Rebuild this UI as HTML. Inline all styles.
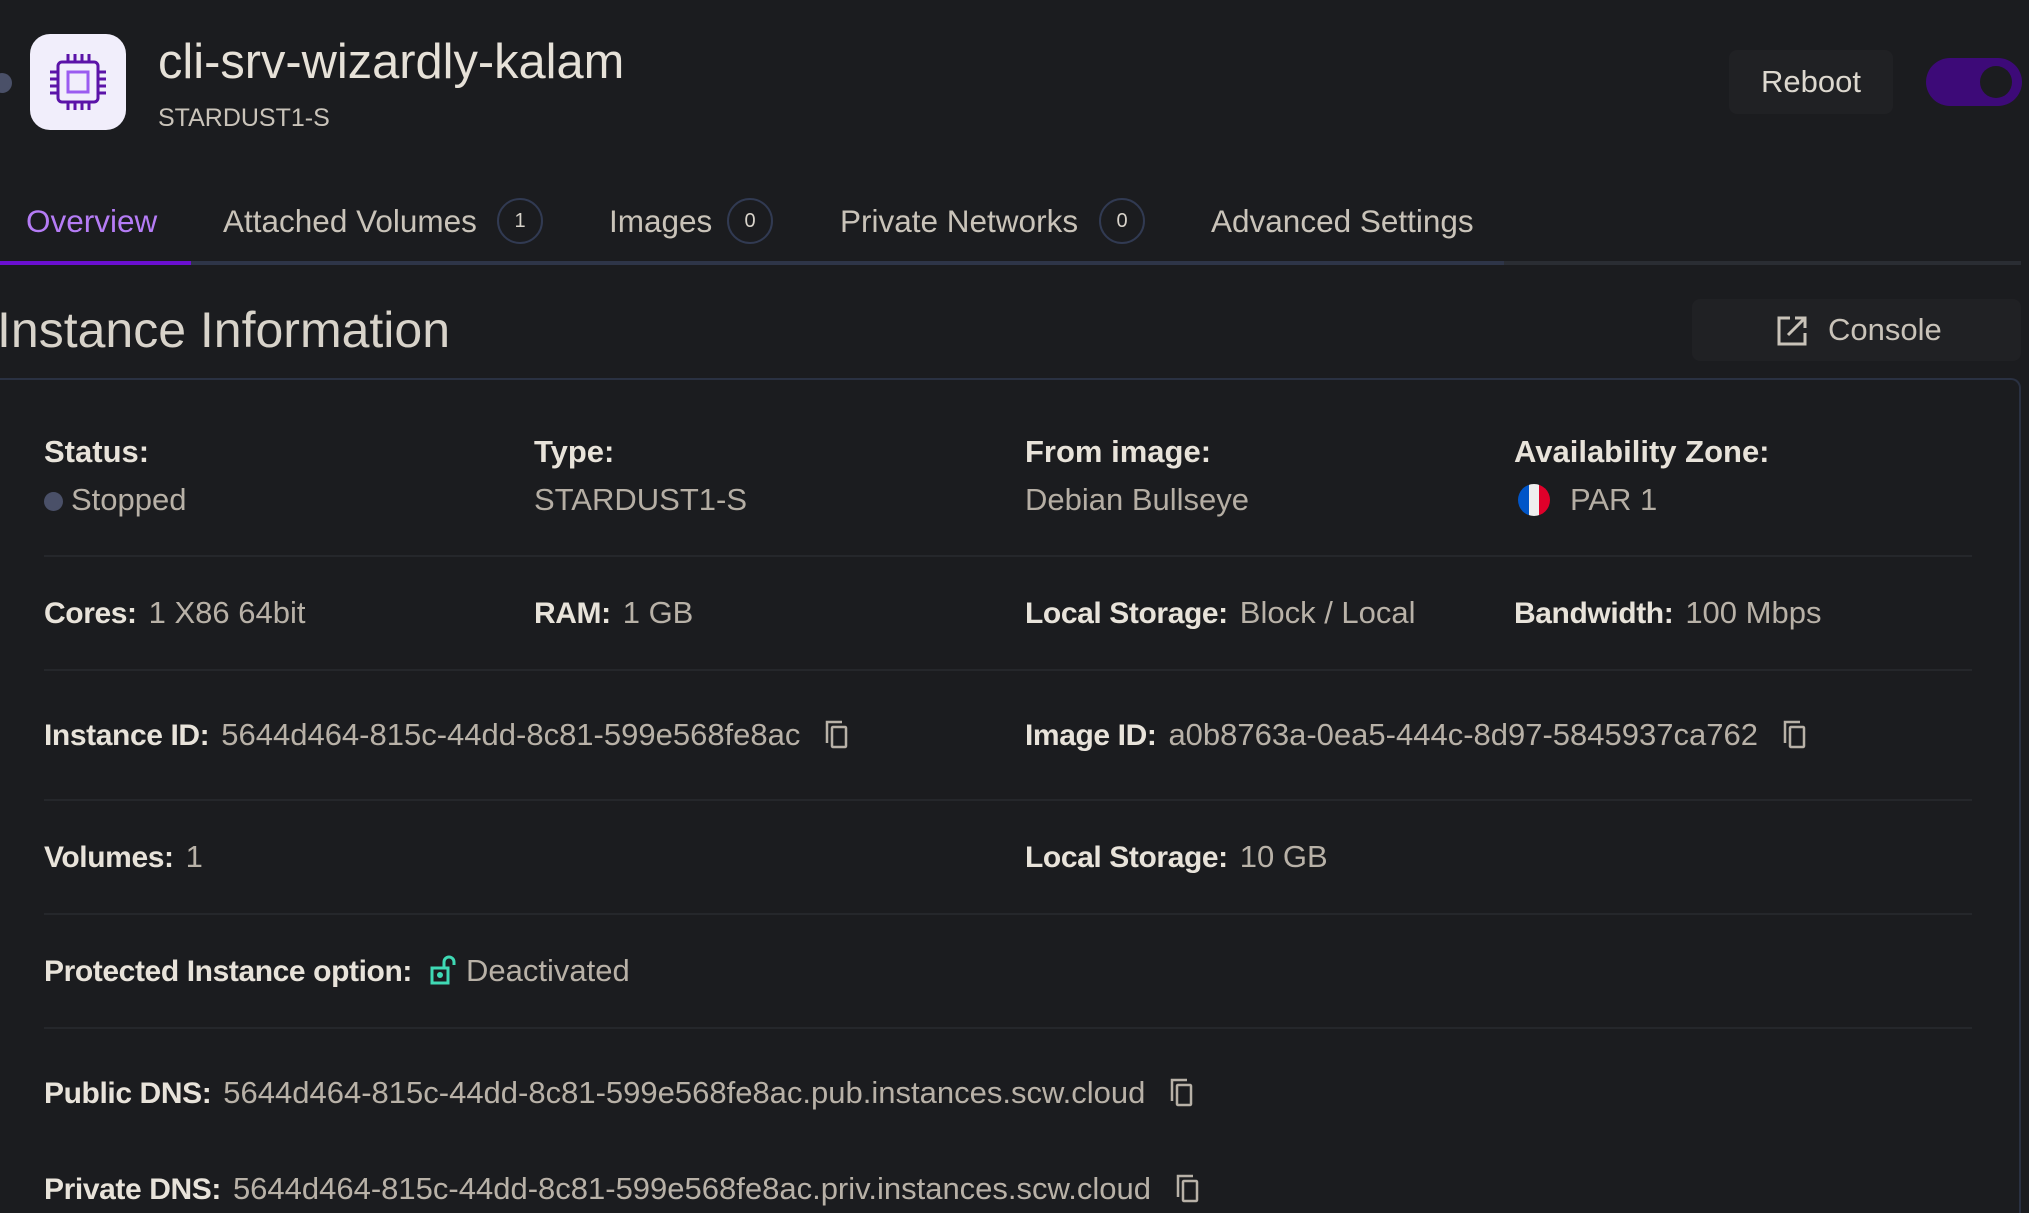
<!DOCTYPE html>
<html><head><meta charset="utf-8"><style>
*{margin:0;padding:0;box-sizing:border-box}
html,body{width:2029px;height:1213px;overflow:hidden}
body{background:#1b1c1f;font-family:"Liberation Sans",sans-serif;position:relative;color:#b5aea4}
.a{position:absolute;white-space:nowrap}
.l{color:#e8e3da;font-weight:bold;font-size:30px;letter-spacing:-0.4px}
.row{position:absolute;font-size:31px;line-height:36px;white-space:nowrap;letter-spacing:0px}
.row .v{color:#b8b1a7;margin-left:12px}
.sep{position:absolute;left:44px;width:1928px;height:2px;background:#25272b}
.tab{position:absolute;top:203px;font-size:31.5px;line-height:36px;color:#c9c3b9}
.badge{position:absolute;top:198px;width:46px;height:46px;border:2px solid #313a52;border-radius:50%;color:#d8d3ca;font-size:20px;text-align:center;line-height:42px}
.cp{display:inline-block;vertical-align:middle;margin-left:24px;margin-top:-6px}
</style></head><body>
<div class="a" style="left:-8px;top:73px;width:20px;height:20px;border-radius:50%;background:#4a5068"></div>
<div class="a" style="left:30px;top:34px;width:96px;height:96px;border-radius:20px;background:#f1eefb">
<svg width="96" height="96" viewBox="0 0 96 96" style="position:absolute;left:0;top:0">
<rect x="28" y="28" width="40" height="40" rx="4" fill="none" stroke="#5b13a8" stroke-width="3"/>
<rect x="38" y="38" width="20" height="20" fill="none" stroke="#9b5cf0" stroke-width="3"/>
<g stroke="#5b13a8" stroke-width="3">
<path d="M38 20v8M45 20v8M52 20v8M59 20v8M38 68v8M45 68v8M52 68v8M59 68v8M20 38h8M20 45h8M20 52h8M20 59h8M68 38h8M68 45h8M68 52h8M68 59h8"/></g></svg></div>
<div class="a" style="left:158px;top:34px;font-size:48.8px;line-height:56px;color:#e6e1d8">cli-srv-wizardly-kalam</div>
<div class="a" style="left:158px;top:102px;font-size:25px;line-height:32px;color:#c9c3b9">STARDUST1-S</div>
<div class="a" style="left:1729px;top:50px;width:164px;height:64px;border-radius:8px;background:#202124;color:#ddd8cf;font-size:31px;line-height:64px;text-align:center">Reboot</div>
<div class="a" style="left:1926px;top:58px;width:96px;height:48px;border-radius:24px;background:#3d0a78"><div style="position:absolute;right:10px;top:8px;width:32px;height:32px;border-radius:50%;background:#1b1c1f"></div></div>

<div class="tab" style="left:26px;color:#b57cf5">Overview</div>
<div class="tab" style="left:223px">Attached Volumes</div><div class="badge" style="left:497px">1</div>
<div class="tab" style="left:609px">Images</div><div class="badge" style="left:727px">0</div>
<div class="tab" style="left:840px">Private Networks</div><div class="badge" style="left:1099px">0</div>
<div class="tab" style="left:1211px">Advanced Settings</div>
<div class="a" style="left:0;top:261px;width:1504px;height:4px;background:#2e3548"></div>
<div class="a" style="left:1504px;top:261px;width:517px;height:4px;background:#2a2d33"></div>
<div class="a" style="left:0;top:261px;width:191px;height:4px;background:#6a0fd0"></div>

<div class="a" style="left:-3px;top:300px;font-size:50px;line-height:60px;color:#d8d3ca">Instance Information</div>
<div class="a" style="left:1692px;top:299px;width:329px;height:62px;border-radius:8px;background:#202124;color:#c9c3b9;font-size:31px;line-height:62px">
<svg style="position:absolute;left:84px;top:16px" width="32" height="32" viewBox="0 0 32 32" fill="none" stroke="#c9c3b9" stroke-width="3"><path d="M14 3H3v26h26V18M12 20L28 4M19 3h10v10"/></svg>
<span style="position:absolute;left:136px">Console</span></div>

<div class="a" style="left:0;top:378px;width:2021px;height:860px;border:2px solid #2a3142;border-left:none;border-bottom:none;border-radius:0 10px 0 0"></div>

<div class="row l" style="left:44px;top:434px">Status:</div>
<div class="row" style="left:44px;top:482px"><span style="display:inline-block;width:19px;height:19px;border-radius:50%;background:#4a5068;vertical-align:-1px;margin-right:8px"></span><span style="color:#b8b1a7">Stopped</span></div>
<div class="row l" style="left:534px;top:434px">Type:</div>
<div class="row" style="left:534px;top:482px">STARDUST1-S</div>
<div class="row l" style="left:1025px;top:434px">From image:</div>
<div class="row" style="left:1025px;top:482px">Debian Bullseye</div>
<div class="row l" style="left:1514px;top:434px">Availability Zone:</div>
<div class="a" style="left:1518px;top:484px;width:32px;height:32px;border-radius:50%;overflow:hidden;background:linear-gradient(90deg,#0055c8 0 34%,#eeeeee 34% 66%,#e0002a 66%)"></div>
<div class="row" style="left:1570px;top:482px">PAR 1</div>
<div class="sep" style="top:555px"></div>

<div class="row" style="left:44px;top:595px"><span class="l">Cores:</span><span class="v">1 X86 64bit</span></div>
<div class="row" style="left:534px;top:595px"><span class="l">RAM:</span><span class="v">1 GB</span></div>
<div class="row" style="left:1025px;top:595px"><span class="l">Local Storage:</span><span class="v">Block / Local</span></div>
<div class="row" style="left:1514px;top:595px"><span class="l">Bandwidth:</span><span class="v">100 Mbps</span></div>
<div class="sep" style="top:669px"></div>

<div class="row" style="left:44px;top:717px"><span class="l">Instance ID:</span><span class="v">5644d464-815c-44dd-8c81-599e568fe8ac</span><svg class="cp" width="26" height="30" viewBox="0 0 26 30" fill="none" stroke="#b8b1a7" stroke-width="2.5"><path d="M3 24V3h15"/><rect x="8" y="8" width="14" height="20" rx="1"/></svg></div>
<div class="row" style="left:1025px;top:717px"><span class="l">Image ID:</span><span class="v">a0b8763a-0ea5-444c-8d97-5845937ca762</span><svg class="cp" width="26" height="30" viewBox="0 0 26 30" fill="none" stroke="#b8b1a7" stroke-width="2.5"><path d="M3 24V3h15"/><rect x="8" y="8" width="14" height="20" rx="1"/></svg></div>
<div class="sep" style="top:799px"></div>

<div class="row" style="left:44px;top:839px"><span class="l">Volumes:</span><span class="v">1</span></div>
<div class="row" style="left:1025px;top:839px"><span class="l">Local Storage:</span><span class="v">10 GB</span></div>
<div class="sep" style="top:913px"></div>

<div class="row" style="left:44px;top:953px"><span class="l">Protected Instance option:</span><svg style="display:inline-block;vertical-align:middle;margin:-6px 8px 0 18px" width="28" height="30" viewBox="0 0 28 30" fill="none" stroke="#3fd9b4" stroke-width="3"><rect x="2" y="13" width="16" height="15"/><path d="M14 13V7a5 5 0 0 1 10 0v3"/><circle cx="10" cy="20" r="1.5" fill="#3fd9b4"/></svg><span style="color:#b8b1a7">Deactivated</span></div>
<div class="sep" style="top:1027px"></div>

<div class="row" style="left:44px;top:1075px"><span class="l">Public DNS:</span><span class="v">5644d464-815c-44dd-8c81-599e568fe8ac.pub.instances.scw.cloud</span><svg class="cp" width="26" height="30" viewBox="0 0 26 30" fill="none" stroke="#b8b1a7" stroke-width="2.5"><path d="M3 24V3h15"/><rect x="8" y="8" width="14" height="20" rx="1"/></svg></div>
<div class="row" style="left:44px;top:1171px"><span class="l">Private DNS:</span><span class="v">5644d464-815c-44dd-8c81-599e568fe8ac.priv.instances.scw.cloud</span><svg class="cp" width="26" height="30" viewBox="0 0 26 30" fill="none" stroke="#b8b1a7" stroke-width="2.5"><path d="M3 24V3h15"/><rect x="8" y="8" width="14" height="20" rx="1"/></svg></div>
</body></html>
